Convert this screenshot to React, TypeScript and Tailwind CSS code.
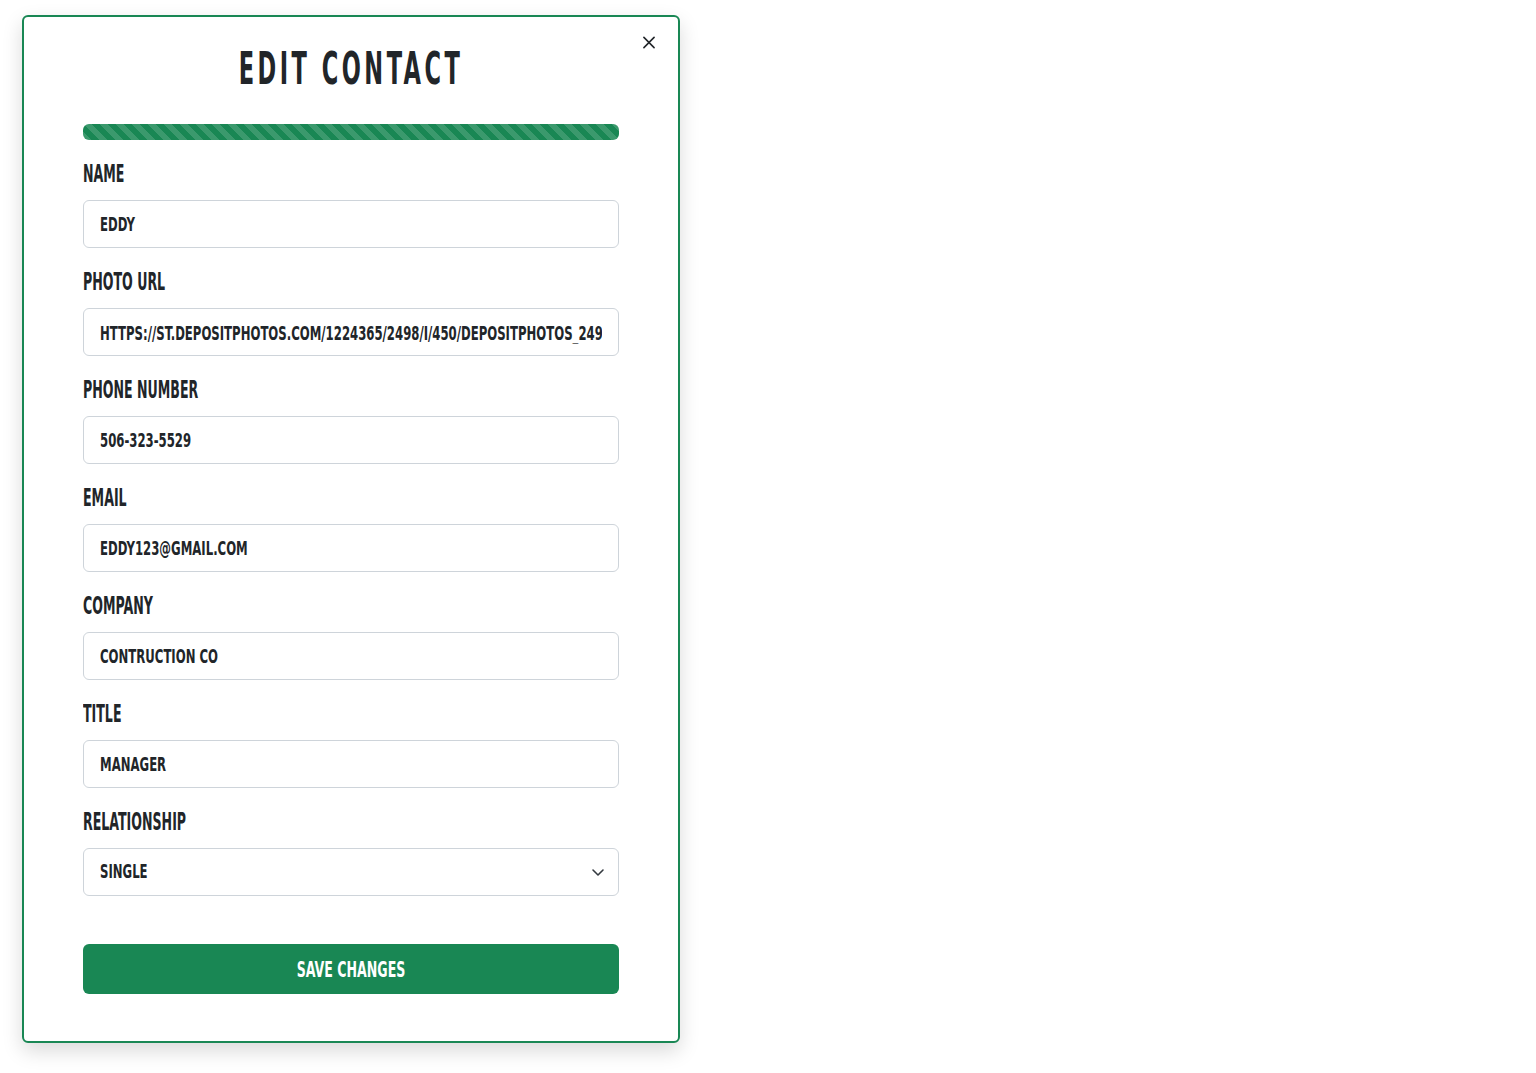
import React from "react";

const font = "font-['Liberation_Sans_Narrow','DejaVu_Sans_Condensed','Liberation_Sans',sans-serif]";

const fields = [
  { label: "Name", value: "EDDY" },
  { label: "Photo URL", value: "HTTPS://ST.DEPOSITPHOTOS.COM/1224365/2498/I/450/DEPOSITPHOTOS_24980235-STOCK-PHOTO-HAPPY-MAN.JPG" },
  { label: "Phone Number", value: "506-323-5529" },
  { label: "Email", value: "EDDY123@GMAIL.COM" },
  { label: "Company", value: "CONTRUCTION CO" },
  { label: "Title", value: "MANAGER" },
];

function Label(props: { children: React.ReactNode }) {
  return (
    <label className="mb-[15px] block h-6 text-[14px] leading-6 font-bold uppercase text-[#212529]">
      <span className="inline-block origin-center scale-y-[1.76]">{props.children}</span>
    </label>
  );
}

function Field(props: { label: string; value: string }) {
  return (
    <div>
      <Label>{props.label}</Label>
      <div className="h-12 overflow-hidden rounded-md border border-[#ced4da] bg-white">
        <input
          defaultValue={props.value}
          className={`h-full w-full origin-center scale-y-[1.48] bg-transparent px-4 text-[13px] font-bold uppercase text-[#212529] outline-none ${font}`}
        />
      </div>
    </div>
  );
}

export default function App() {
  return (
    <div className={`min-h-screen bg-white pt-[15px] pl-[22px] ${font}`}>
      <div className="relative w-[658px] rounded-md border-2 border-[#198754] bg-white px-[59px] pt-[33px] pb-[47px] shadow-[0_8px_20px_rgba(0,0,0,0.15)]">
        {/* close */}
        <button className="absolute top-[19px] right-[23px] flex h-3 w-3 items-center justify-center text-[#212529]">
          <svg width="13" height="13" viewBox="0 0 13 13" fill="none">
            <path d="M1 1L12 12M12 1L1 12" stroke="currentColor" strokeWidth="1.7" strokeLinecap="round" />
          </svg>
        </button>

        <h1 className="h-10 text-center text-[25px] leading-10 font-bold tracking-[3.5px] uppercase text-[#212529]">
          <span className="inline-block origin-center scale-y-[1.76]">Edit Contact</span>
        </h1>

        <div className="mt-[34px] h-4 rounded-md bg-[#198754] bg-[linear-gradient(45deg,rgba(255,255,255,.15)_25%,transparent_25%,transparent_50%,rgba(255,255,255,.15)_50%,rgba(255,255,255,.15)_75%,transparent_75%,transparent)] bg-[length:1rem_1rem]" />

        <div className="mt-[21px] flex flex-col gap-[21px]">
          {fields.map((f) => (
            <Field key={f.label} label={f.label} value={f.value} />
          ))}
          <div>
            <Label>Relationship</Label>
            <div className="relative h-12 overflow-hidden rounded-md border border-[#ced4da] bg-white">
              <select
                defaultValue="single"
                className={`h-full w-full origin-center scale-y-[1.48] appearance-none bg-transparent px-4 text-[13px] font-bold uppercase text-[#212529] outline-none ${font}`}
              >
                <option value="single">SINGLE</option>
                <option value="married">MARRIED</option>
              </select>
              <svg
                className="pointer-events-none absolute top-1/2 right-3 -translate-y-1/2"
                width="16"
                height="16"
                viewBox="0 0 16 16"
                fill="none"
              >
                <path d="M3 6l5 5 5-5" stroke="#343a40" strokeWidth="1.6" strokeLinecap="round" strokeLinejoin="round" />
              </svg>
            </div>
          </div>
        </div>

        <button className="mt-12 flex h-[50px] w-full items-center justify-center rounded-md bg-[#198754] text-[14px] font-bold uppercase text-white">
          <span className="inline-block origin-center scale-y-[1.57]">Save Changes</span>
        </button>
      </div>
    </div>
  );
}
